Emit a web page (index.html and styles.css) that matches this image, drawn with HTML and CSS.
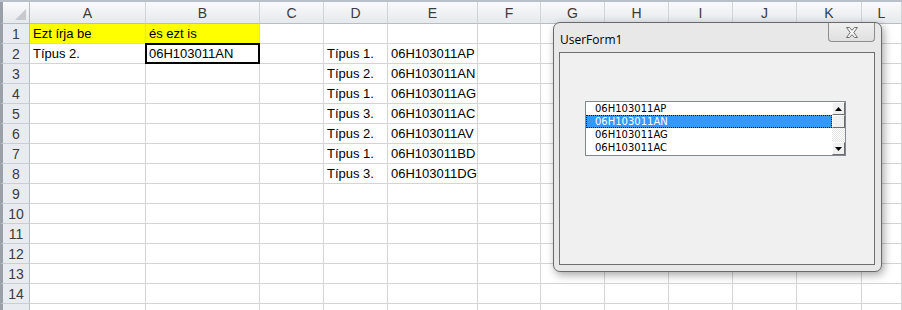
FILE: index.html
```html
<!DOCTYPE html>
<html>
<head>
<meta charset="utf-8">
<link rel="stylesheet" href="styles.css">
</head>
<body>
<div class="app">
  <div class="sheet">
    <div class="hd corner"><span class="tri"></span></div>
    <div class="hd">A</div><div class="hd">B</div><div class="hd">C</div><div class="hd">D</div><div class="hd">E</div><div class="hd">F</div><div class="hd">G</div><div class="hd">H</div><div class="hd">I</div><div class="hd">J</div><div class="hd">K</div><div class="hd">L</div>

    <div class="rh">1</div><div class="c yel">Ezt írja be</div><div class="c yel">és ezt is</div><div class="c"></div><div class="c"></div><div class="c"></div><div class="c"></div><div class="c"></div><div class="c"></div><div class="c"></div><div class="c"></div><div class="c"></div><div class="c"></div>
    <div class="rh">2</div><div class="c">Típus 2.</div><div class="c sel">06H103011AN</div><div class="c"></div><div class="c">Típus 1.</div><div class="c">06H103011AP</div><div class="c"></div><div class="c"></div><div class="c"></div><div class="c"></div><div class="c"></div><div class="c"></div><div class="c"></div>
    <div class="rh">3</div><div class="c"></div><div class="c"></div><div class="c"></div><div class="c">Típus 2.</div><div class="c">06H103011AN</div><div class="c"></div><div class="c"></div><div class="c"></div><div class="c"></div><div class="c"></div><div class="c"></div><div class="c"></div>
    <div class="rh">4</div><div class="c"></div><div class="c"></div><div class="c"></div><div class="c">Típus 1.</div><div class="c">06H103011AG</div><div class="c"></div><div class="c"></div><div class="c"></div><div class="c"></div><div class="c"></div><div class="c"></div><div class="c"></div>
    <div class="rh">5</div><div class="c"></div><div class="c"></div><div class="c"></div><div class="c">Típus 3.</div><div class="c">06H103011AC</div><div class="c"></div><div class="c"></div><div class="c"></div><div class="c"></div><div class="c"></div><div class="c"></div><div class="c"></div>
    <div class="rh">6</div><div class="c"></div><div class="c"></div><div class="c"></div><div class="c">Típus 2.</div><div class="c">06H103011AV</div><div class="c"></div><div class="c"></div><div class="c"></div><div class="c"></div><div class="c"></div><div class="c"></div><div class="c"></div>
    <div class="rh">7</div><div class="c"></div><div class="c"></div><div class="c"></div><div class="c">Típus 1.</div><div class="c">06H103011BD</div><div class="c"></div><div class="c"></div><div class="c"></div><div class="c"></div><div class="c"></div><div class="c"></div><div class="c"></div>
    <div class="rh">8</div><div class="c"></div><div class="c"></div><div class="c"></div><div class="c">Típus 3.</div><div class="c">06H103011DG</div><div class="c"></div><div class="c"></div><div class="c"></div><div class="c"></div><div class="c"></div><div class="c"></div><div class="c"></div>
    <div class="rh">9</div><div class="c"></div><div class="c"></div><div class="c"></div><div class="c"></div><div class="c"></div><div class="c"></div><div class="c"></div><div class="c"></div><div class="c"></div><div class="c"></div><div class="c"></div><div class="c"></div>
    <div class="rh">10</div><div class="c"></div><div class="c"></div><div class="c"></div><div class="c"></div><div class="c"></div><div class="c"></div><div class="c"></div><div class="c"></div><div class="c"></div><div class="c"></div><div class="c"></div><div class="c"></div>
    <div class="rh">11</div><div class="c"></div><div class="c"></div><div class="c"></div><div class="c"></div><div class="c"></div><div class="c"></div><div class="c"></div><div class="c"></div><div class="c"></div><div class="c"></div><div class="c"></div><div class="c"></div>
    <div class="rh">12</div><div class="c"></div><div class="c"></div><div class="c"></div><div class="c"></div><div class="c"></div><div class="c"></div><div class="c"></div><div class="c"></div><div class="c"></div><div class="c"></div><div class="c"></div><div class="c"></div>
    <div class="rh">13</div><div class="c"></div><div class="c"></div><div class="c"></div><div class="c"></div><div class="c"></div><div class="c"></div><div class="c"></div><div class="c"></div><div class="c"></div><div class="c"></div><div class="c"></div><div class="c"></div>
    <div class="rh">14</div><div class="c"></div><div class="c"></div><div class="c"></div><div class="c"></div><div class="c"></div><div class="c"></div><div class="c"></div><div class="c"></div><div class="c"></div><div class="c"></div><div class="c"></div><div class="c"></div>
    <div class="rh"></div><div class="c"></div><div class="c"></div><div class="c"></div><div class="c"></div><div class="c"></div><div class="c"></div><div class="c"></div><div class="c"></div><div class="c"></div><div class="c"></div><div class="c"></div><div class="c"></div>
  </div>

  <div class="form">
    <div class="titlebar">
      <span class="title">UserForm1</span>
      <div class="close">
        <svg width="18" height="13" viewBox="0 0 18 13">
          <path d="M3.5 1.5 L6.5 1.5 L9 4.3 L11.5 1.5 L14.5 1.5 L10.8 6.5 L14.5 11.5 L11.5 11.5 L9 8.7 L6.5 11.5 L3.5 11.5 L7.2 6.5 Z" fill="#f7f7f7" stroke="#6e6e6e" stroke-width="1" stroke-linejoin="round"/>
        </svg>
      </div>
    </div>
    <div class="client">
      <div class="listbox">
        <div class="items">
          <div class="item">06H103011AP</div>
          <div class="item on">06H103011AN</div>
          <div class="item">06H103011AG</div>
          <div class="item">06H103011AC</div>
        </div>
        <div class="vscroll">
          <div class="sbtn"><svg width="7" height="4" viewBox="0 0 7 4"><path d="M0 4 L3.5 0 L7 4 Z" fill="#000"/></svg></div>
          <div class="thumb"></div>
          <div class="track"></div>
          <div class="sbtn"><svg width="7" height="4" viewBox="0 0 7 4"><path d="M0 0 L7 0 L3.5 4 Z" fill="#000"/></svg></div>
        </div>
      </div>
    </div>
  </div>
</div>
</body>
</html>
```

FILE: styles.css
```css
* { box-sizing: border-box; }
html, body { margin: 0; padding: 0; background: #fff; }
body { width: 902px; height: 310px; overflow: hidden; }

.app { position: relative; width: 902px; height: 310px; overflow: hidden; }

.sheet {
  display: grid;
  grid-template-columns: 30px 116px 114px 64px 64px 90px 63px 64px 64px 64px 64px 65px 40px;
  grid-template-rows: 22px repeat(15, 20px);
  font-family: "Liberation Sans", Arial, sans-serif;
  font-size: 13px;
  color: #000;
  border-top: 2px solid #b9c0c9;
}

.hd {
  background: linear-gradient(#f9fafb, #e6e9ed);
  border-right: 1px solid #d0d3d8;
  border-bottom: 1px solid #b8bdc4;
  color: #3b3b3b;
  font-size: 14px;
  display: flex;
  align-items: center;
  justify-content: center;
}
.corner { position: relative; border-right: 1px solid #b8bdc4; border-left: 3px solid #9aa0a8; }
.tri {
  position: absolute; right: 3px; bottom: 3px;
  width: 0; height: 0;
  border-left: 11px solid transparent;
  border-bottom: 11px solid #c6cacf;
}

.rh {
  background: #e8ecf1;
  border-left: 3px solid #9aa0a8;
  border-right: 1px solid #b8bdc4;
  border-bottom: 1px solid #c8ced6;
  color: #3b3b3b;
  font-size: 14px;
  display: flex;
  align-items: center;
  justify-content: center;
}

.c {
  border-right: 1px solid #d4d4d4;
  border-bottom: 1px solid #d4d4d4;
  padding-left: 3px;
  display: flex;
  align-items: center;
  white-space: nowrap;
  overflow: hidden;
}
.yel { background: #ffff00; }
.sel { position: relative; z-index: 1; overflow: visible; }
.sel::after {
  content: "";
  position: absolute;
  left: -1px; top: -1px; right: -1px; bottom: -1px;
  border: 2px solid #000;
}

/* UserForm window */
.form {
  position: absolute;
  left: 553px; top: 22px;
  width: 329px; height: 250px;
  background: #e8e8e8;
  border: 1px solid #6a6a6a;
  border-radius: 7px;
  box-shadow: 2px 3px 8px rgba(0,0,0,0.35);
  padding: 0 6px 6px 5px;
  display: flex;
  flex-direction: column;
}
.titlebar {
  height: 29px;
  display: flex;
  align-items: flex-start;
  justify-content: space-between;
  font-family: "Open Sans", "DejaVu Sans", sans-serif;
  font-size: 12px;
}
.title { margin-top: 8px; margin-left: 1px; color: #000; }
.close {
  width: 47px; height: 19px;
  border: 1px solid #8d8d8d;
  border-top: none;
  border-radius: 0 0 4px 4px;
  background: linear-gradient(#efefef, #e0e0e0);
  display: flex; align-items: center; justify-content: center;
}
.client {
  flex: 1;
  background: #f0f0f0;
  border: 1px solid #6f6f6f;
  padding: 48px 0 0 25px;
}

.listbox {
  width: 261px; height: 55px;
  background: #fff;
  border: 1px solid #828790;
  display: flex;
  font-family: "DejaVu Sans", Tahoma, sans-serif;
  font-size: 10px;
}
.items { flex: 1; }
.item { height: 13px; line-height: 13px; padding-left: 9px; color: #000; }
.item.on { background: #3399ff; color: #fff; outline: 1px dotted #1a1a1a; outline-offset: -1px; }

.vscroll { width: 13px; display: flex; flex-direction: column; }
.sbtn {
  height: 13px;
  background: #f0f0f0;
  border: 1px solid;
  border-color: #fff #6d6d6d #6d6d6d #fff;
  display: flex; align-items: center; justify-content: center;
}
.thumb {
  height: 13px;
  background: #f0f0f0;
  border: 1px solid;
  border-color: #fff #6d6d6d #6d6d6d #fff;
}
.track {
  flex: 1;
  background-color: #f6f6f6;
  background-image: repeating-conic-gradient(#ffffff 0 25%, #e4e4e4 0 50%);
  background-size: 2px 2px;
}
```
